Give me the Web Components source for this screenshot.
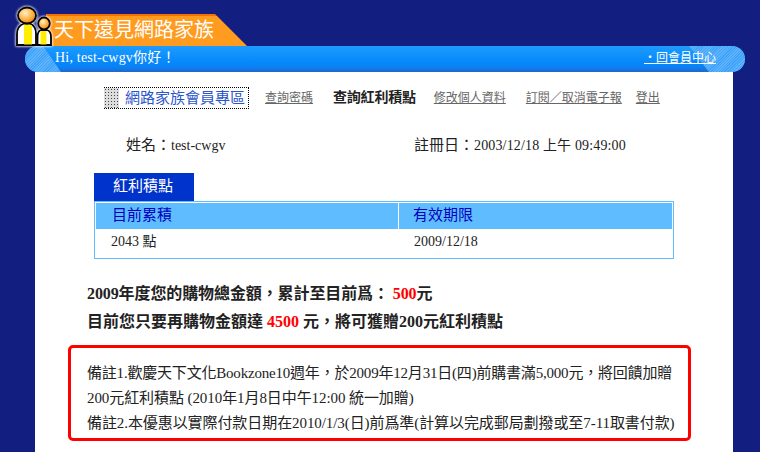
<!DOCTYPE html>
<html lang="zh-Hant"><head><meta charset="utf-8">
<style>
html,body{margin:0;padding:0;background:#131f80;height:452px;overflow:hidden}
body{font:14px/18px "Liberation Serif","Noto Sans CJK TC",serif;color:#222}
</style></head><body>
<site-header></site-header>
<main-panel>
<member-nav></member-nav>
<member-info></member-info>
<bonus-table></bonus-table>
<bonus-summary></bonus-summary>
<note-box></note-box>
</main-panel>
<script>
function def(name,html){customElements.define(name,class extends HTMLElement{constructor(){super();this.attachShadow({mode:'open'}).innerHTML=html}})}
const CJK='"Liberation Serif","Noto Sans CJK TC",serif';
const bodies='<path d="M3 41V30Q3 22 10 19.500H16Q22 22 22 30V41Z"/><ellipse cx="13" cy="11.500" rx="9" ry="8"/><path d="M23.500 41V33Q23.500 27 27 26H33Q37 27 37 33V41Z"/><ellipse cx="30" cy="19.500" rx="5.800" ry="6"/>';
def('site-header',`<style>
:host{display:block;position:relative;height:72px}
.tabrow{height:46px;box-sizing:border-box;padding:14px 0 0 46px}
.tab{width:201px;height:32px;box-sizing:border-box;padding:2px 0 0 8px;background:linear-gradient(#f47000 0 2px,#ff9b1f 2px);clip-path:polygon(0 0,169px 0,201px 32px,0 32px);color:#fff;font:20px/26px "Noto Sans CJK TC",sans-serif}
.bar{height:26px;margin:0 15px 0 25px;border-radius:13px;background:linear-gradient(#1c9bfe,#0587fb 68%,#0b7fee 85%,#2564c8);display:flex;align-items:flex-start;justify-content:space-between;position:relative;overflow:hidden;color:#fff;font:14px/24px ${CJK}}
.bar::before,.bar::after{content:"";position:absolute;top:0;bottom:0;background:repeating-linear-gradient(135deg,#5fb3fb 0 1px,#3fa2fb 1px 2px)}
.bar::before{left:0;width:40px;clip-path:polygon(0 0,18px 0,36px 26px,0 26px)}
.bar::after{right:0;width:56px;clip-path:polygon(0 0,56px 0,56px 26px,20px 26px)}
.hi{position:relative;z-index:1;margin-left:30px;letter-spacing:.2px}
a{position:relative;z-index:1;margin-right:29px;color:#fff;text-decoration:underline;font-size:12px;line-height:24px;white-space:nowrap}
svg{position:absolute;left:14px;top:4px;overflow:visible}
.glow{fill:#fff;stroke:#fff;stroke-width:3;filter:blur(1.2px)}
.line{fill:#fff;stroke:#000;stroke-width:1.8}
</style>
<div class="tabrow"><div class="tab">天下遠見網路家族</div></div>
<div class="bar"><span class="hi">Hi, test-cwgv你好！</span><a>・回會員中心</a></div>
<svg width="42" height="44" viewBox="0 0 42 44"><defs><radialGradient id="o" cx=".4" cy=".35" r=".75"><stop offset="0" stop-color="#fff0d0"/><stop offset=".5" stop-color="#ffb648"/><stop offset="1" stop-color="#e87800"/></radialGradient></defs>
<g class="glow">${bodies}</g>
<g class="line">
<path d="M3 41V30Q3 22 10 19.500H16Q22 22 22 30V41Z"/><path d="M10 21h8v19.500h-8z" fill="#ffee00" stroke="none"/>
<ellipse cx="13" cy="11.500" rx="9" ry="8" fill="url(#o)"/>
<path d="M23.500 41V33Q23.500 27 27 26H33Q37 27 37 33V41Z"/><path d="M26.500 27h6v13.500h-6z" fill="#ffee00" stroke="none"/>
<ellipse cx="30" cy="19.500" rx="5.800" ry="6" fill="url(#o)"/></g></svg>`);
def('main-panel',`<style>:host{display:block;margin:0 27px 0 35px;height:380px;background:#fff;box-sizing:border-box;overflow:hidden}</style><slot></slot>`);
def('member-nav',`<style>
:host{display:flex;align-items:center;height:22px;margin:15px 0 0 69px;color:#666;font-size:12px}
.home{display:flex;align-items:stretch;height:22px;box-sizing:border-box;border:1px dotted #000;border-left:0;color:#2a55cc;font-size:15px;line-height:20px;margin-right:16px;width:145px;white-space:nowrap}
.home i{width:15px;flex:none;margin-right:6px;background:radial-gradient(circle,#444 .6px,transparent .9px) 0 0/3px 3px,#ddd}
a{text-decoration:underline;margin-right:20px;white-space:nowrap}
b{color:#222;margin-right:18px;font-weight:700;font-size:14px;letter-spacing:-.2px}
.s{margin-right:14px}
</style><span class="home"><i></i>網路家族會員專區</span><a>查詢密碼</a><b>查詢紅利積點</b><a>修改個人資料</a><a class="s">訂閱／取消電子報</a><a>登出</a>`);
def('member-info',`<style>
:host{display:flex;margin:26px 0 0 91px;font-size:15px;line-height:20px;color:#222}
.a{width:288px;white-space:nowrap}.a span,.b span{font-size:14px}
.b span{letter-spacing:.15px}
</style><div class="a">姓名：<span>test-cwgv</span></div><div class="b">註冊日：<span>2003/12/18 上午 09:49:00</span></div>`);
def('bonus-table',`<style>
:host{display:block;margin:17px 0 0 59px;width:580px;font-size:14px}
.t{width:100px;height:28px;box-sizing:border-box;padding-right:2px;background:#0033cc;color:#fff;text-align:center;line-height:27px;font-size:15px}
.g{display:grid;grid-template-columns:302px 1fr;grid-template-rows:26px 28px;gap:0 1px;border:1px solid #5fbdff;padding:1px;box-sizing:border-box;height:58px}
.h{background:#5fbdff;color:#0000c0;font-size:15px;line-height:25px;padding-left:16px}
.h+.h{padding-left:14px}
.c{padding-left:15px;line-height:26px}
</style><div class="t">紅利積點</div><div class="g"><div class="h">目前累積</div><div class="h">有效期限</div><div class="c">2043 點</div><div class="c">2009/12/18</div></div>`);
def('bonus-summary',`<style>
:host{display:block;margin:21px 0 0 52px;font-size:16px;line-height:28px;font-weight:700;color:#222;white-space:nowrap}
em{font-style:normal;color:#f00}
.l1{letter-spacing:-.1px}
</style><div class="l1">2009年度您的購物總金額，累計至目前爲： <em>500</em>元</div><div>目前您只要再購物金額達 <em>4500</em> 元，將可獲贈200元紅利積點</div>`);
def('note-box',`<style>
:host{display:block;margin:9px 0 0 33px;width:623px;height:96px;box-sizing:border-box;border:3px solid #f00;border-radius:5px;padding:13px 0 0 16px;font-size:15px;line-height:25px;color:#222;white-space:nowrap}
.a{letter-spacing:-.2px}.b{letter-spacing:-.08px}
</style><div class="a">備註1.歡慶天下文化Bookzone10週年，於2009年12月31日(四)前購書滿5,000元，將回饋加贈</div><div class="b">200元紅利積點 (2010年1月8日中午12:00 統一加贈)</div><div class="b">備註2.本優惠以實際付款日期在2010/1/3(日)前爲準(計算以完成郵局劃撥或至7-11取書付款)</div>`);
</script>
</body></html>
